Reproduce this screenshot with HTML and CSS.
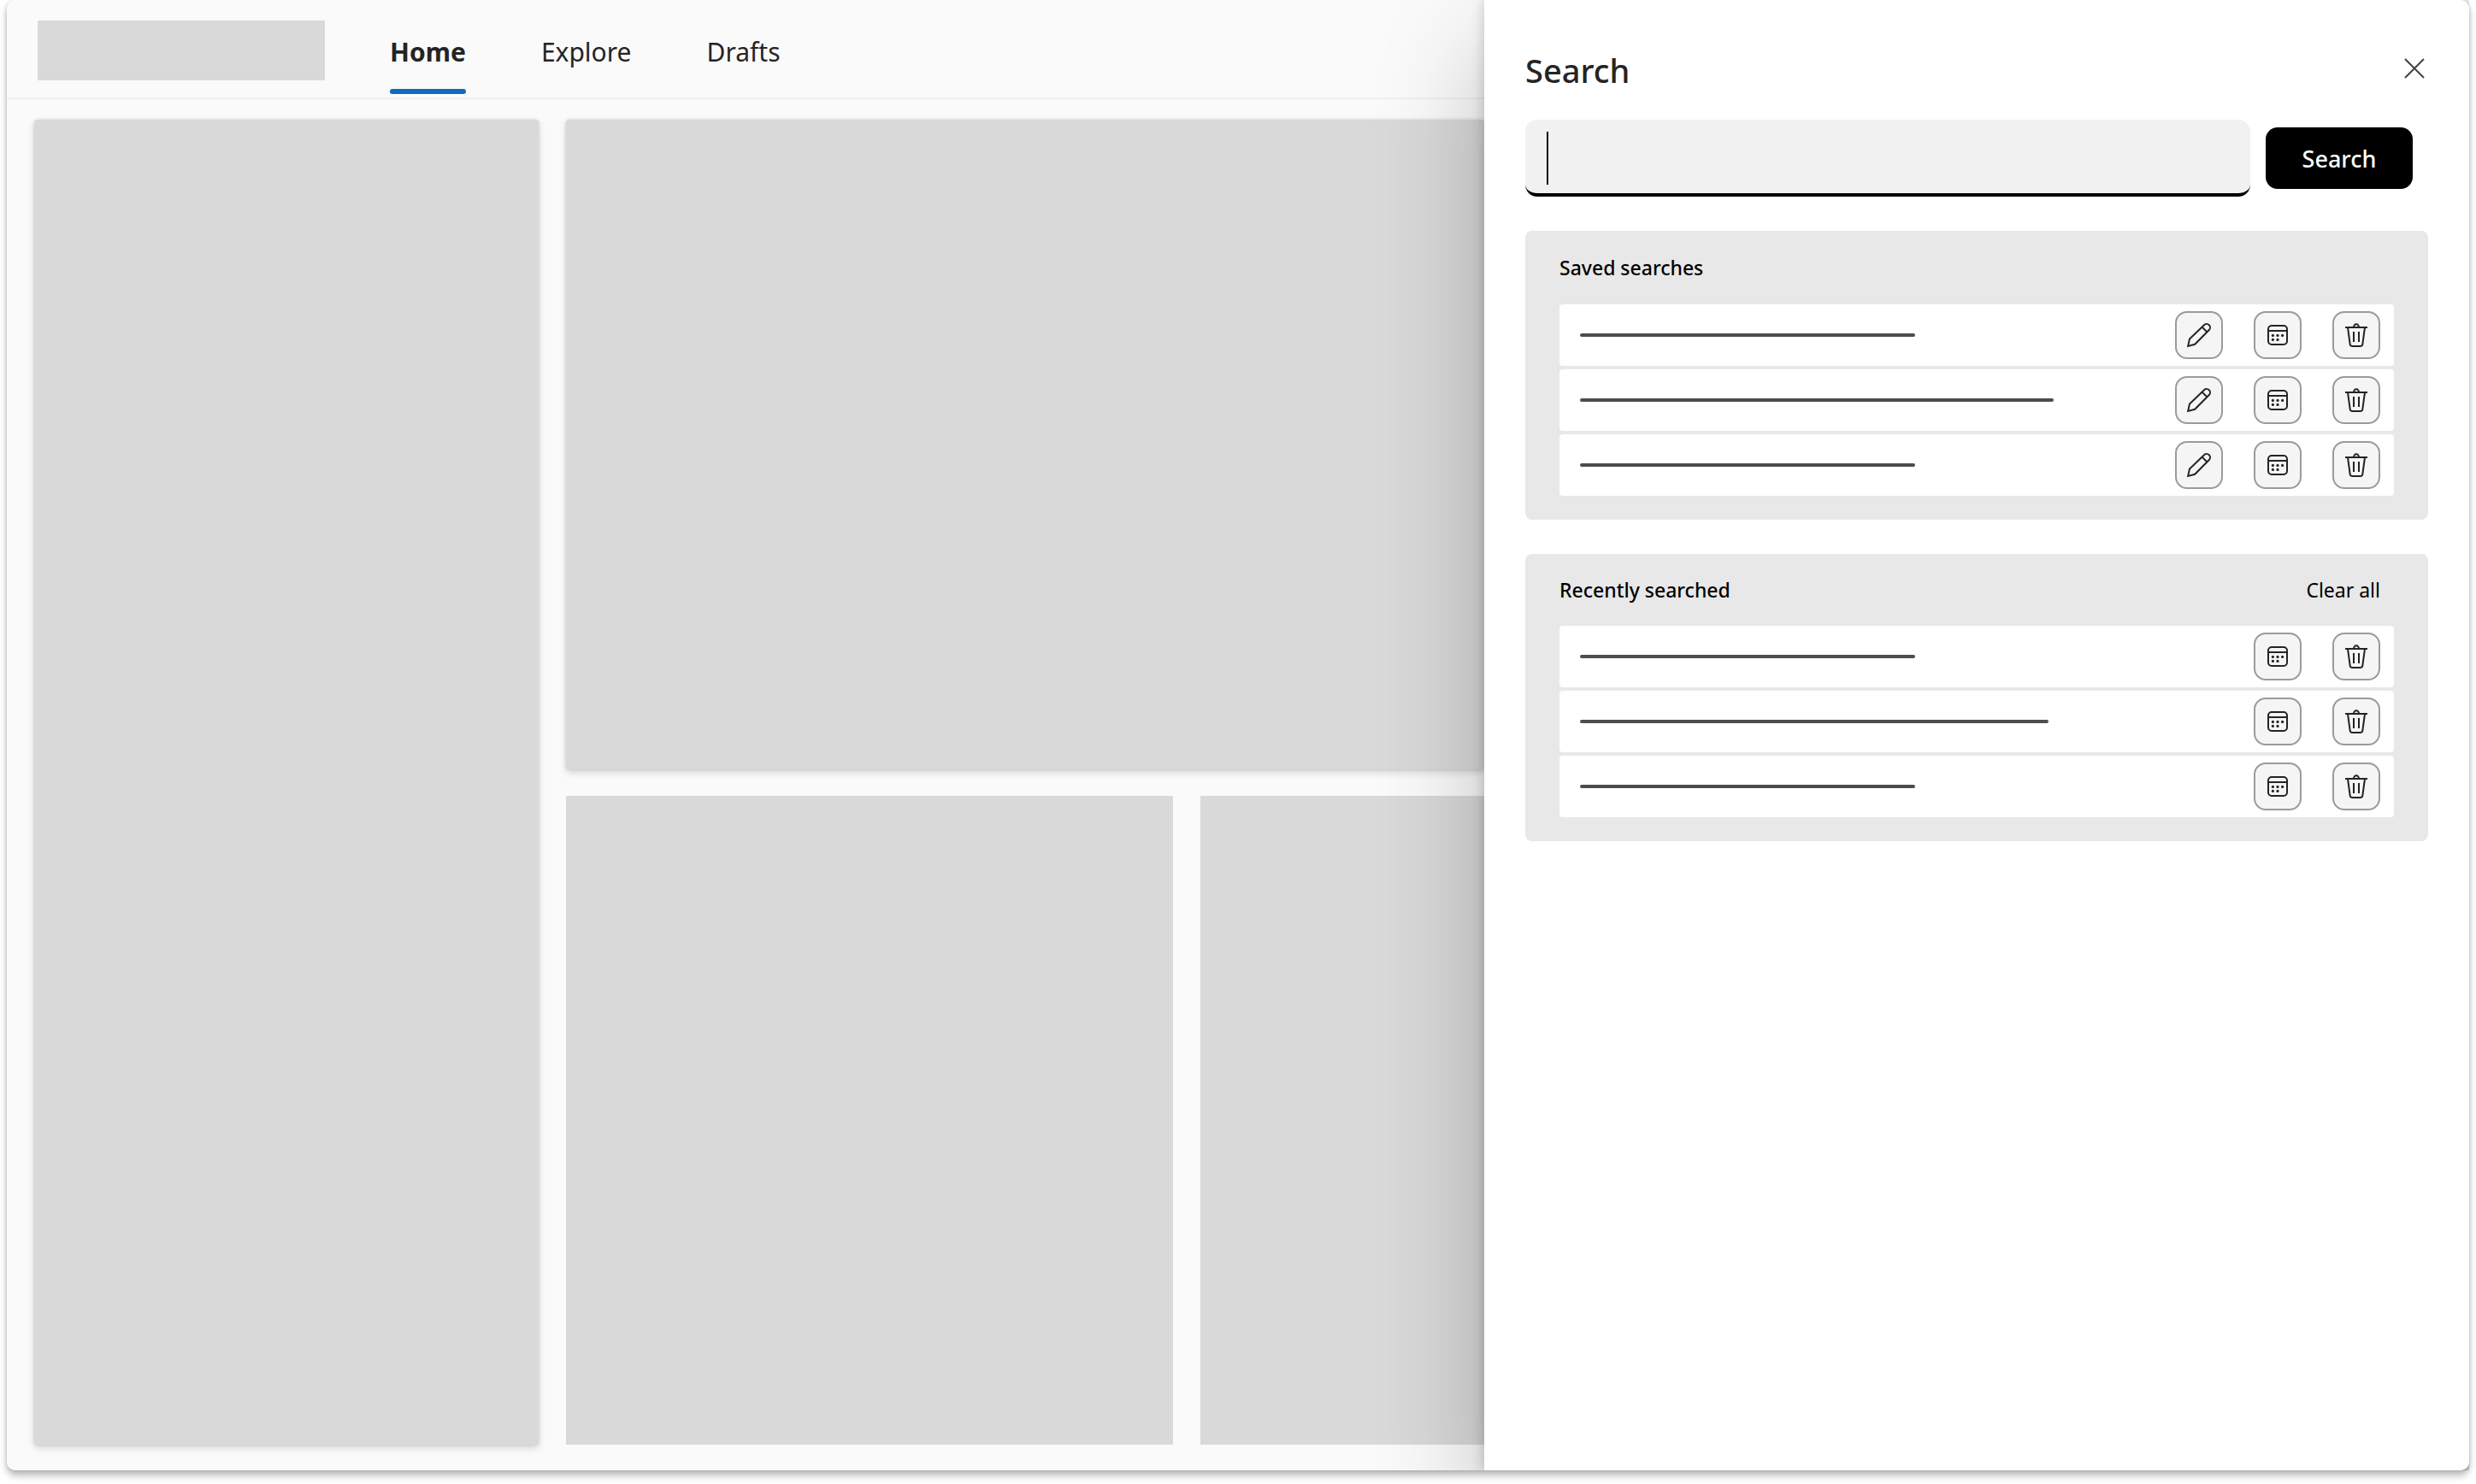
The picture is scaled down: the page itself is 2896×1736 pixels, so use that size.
FILE: index.html
```html
<!DOCTYPE html>
<html lang="en">
<head>
    <meta charset="UTF-8">
    <meta name="viewport" content="width=device-width, initial-scale=1.0">
    <title>Search</title>
    <link rel="stylesheet" href="styles.css">
</head>
<body>

    <!-- Shared icons -->
    <svg class="sprite" aria-hidden="true">
        <symbol id="icon-edit" viewBox="0 0 32 32">
            <path d="M3.2 28.9L5 20.6 22 4.2a4.1 4.1 0 0 1 5.8 5.8L11.2 26.8ZM19.6 6.6l5.7 5.7"/>
        </symbol>
        <symbol id="icon-calendar" viewBox="0 0 32 32">
            <rect x="5" y="5" width="22" height="22" rx="4"/>
            <path d="M5 11h22"/>
            <g class="dots">
                <circle cx="10.4" cy="16.4" r="1.6"/>
                <circle cx="16" cy="16.4" r="1.6"/>
                <circle cx="21.6" cy="16.4" r="1.6"/>
                <circle cx="10.4" cy="21.4" r="1.6"/>
                <circle cx="16" cy="21.4" r="1.6"/>
            </g>
        </symbol>
        <symbol id="icon-delete" viewBox="0 0 32 32">
            <path d="M3 7h26M13 7a3 3.8 0 0 1 6 0M6 7l2.6 19.2A3 3 0 0 0 11.6 29h8.8a3 3 0 0 0 3-2.8L26 7M13 12v12M19 12v12"/>
        </symbol>
    </svg>

    <div class="window">
        <div class="app">
            <header class="topbar">
                <div class="logo"></div>
                <nav class="tabs">
                    <a href="#" class="active">Home</a>
                    <a href="#">Explore</a>
                    <a href="#">Drafts</a>
                </nav>
            </header>
            <main class="board">
                <div class="card side raised"></div>
                <div class="card hero raised"></div>
                <div class="card"></div>
                <div class="card"></div>
            </main>
        </div>

        <aside class="drawer">
            <div class="drawer-head">
                <h1>Search</h1>
                <button type="button" class="close" aria-label="Close">
                    <svg viewBox="0 0 24 24"><path d="M1 1l22 22M23 1L1 23"/></svg>
                </button>
            </div>

            <form class="search-form">
                <div class="field">
                    <input type="text" id="query" aria-label="Search">
                    <span class="caret"></span>
                </div>
                <button type="button" class="submit">Search</button>
            </form>

            <section class="panel">
                <div class="panel-head">
                    <h2>Saved searches</h2>
                </div>
                <ul class="rows">
                    <li>
                        <span class="line"></span>
                        <button type="button" aria-label="Edit"><svg><use href="#icon-edit"/></svg></button>
                        <button type="button" aria-label="Schedule"><svg><use href="#icon-calendar"/></svg></button>
                        <button type="button" aria-label="Delete"><svg><use href="#icon-delete"/></svg></button>
                    </li>
                    <li>
                        <span class="line long"></span>
                        <button type="button" aria-label="Edit"><svg><use href="#icon-edit"/></svg></button>
                        <button type="button" aria-label="Schedule"><svg><use href="#icon-calendar"/></svg></button>
                        <button type="button" aria-label="Delete"><svg><use href="#icon-delete"/></svg></button>
                    </li>
                    <li>
                        <span class="line"></span>
                        <button type="button" aria-label="Edit"><svg><use href="#icon-edit"/></svg></button>
                        <button type="button" aria-label="Schedule"><svg><use href="#icon-calendar"/></svg></button>
                        <button type="button" aria-label="Delete"><svg><use href="#icon-delete"/></svg></button>
                    </li>
                </ul>
            </section>

            <section class="panel recent">
                <div class="panel-head">
                    <h2>Recently searched</h2>
                    <button type="button" class="clear">Clear all</button>
                </div>
                <ul class="rows">
                    <li>
                        <span class="line"></span>
                        <button type="button" aria-label="Schedule"><svg><use href="#icon-calendar"/></svg></button>
                        <button type="button" aria-label="Delete"><svg><use href="#icon-delete"/></svg></button>
                    </li>
                    <li>
                        <span class="line long"></span>
                        <button type="button" aria-label="Schedule"><svg><use href="#icon-calendar"/></svg></button>
                        <button type="button" aria-label="Delete"><svg><use href="#icon-delete"/></svg></button>
                    </li>
                    <li>
                        <span class="line"></span>
                        <button type="button" aria-label="Schedule"><svg><use href="#icon-calendar"/></svg></button>
                        <button type="button" aria-label="Delete"><svg><use href="#icon-delete"/></svg></button>
                    </li>
                </ul>
            </section>
        </aside>
    </div>

</body>
</html>
```
FILE: styles.css
```css
* {
    box-sizing: border-box;
}
body {
    margin: 0;
    padding: 0 8px 16px;
    background-color: #fff;
    color: #242424;
    font-family: "Noto Sans", "Open Sans", sans-serif;
}
h1, h2, ul {
    margin: 0;
    padding: 0;
}
button {
    font-family: inherit;
    cursor: pointer;
}
.sprite {
    display: none;
}
.window {
    display: flex;
    height: calc(100vh - 16px);
    border-radius: 10px;
    box-shadow: 0 6px 8px rgba(0, 0, 0, 0.28), 0 0 4px rgba(0, 0, 0, 0.14);
}

/* Page behind the drawer */
.app {
    display: flex;
    flex-direction: column;
    width: 60%;
    background-color: #fafafa;
    border-radius: 10px 0 0 10px;
    overflow: hidden;
}
.topbar {
    display: flex;
    gap: 76px;
    height: 116px;
    padding: 24px 36px 0;
    border-bottom: 2px solid #f0f0f0;
}
.logo {
    width: 336px;
    height: 70px;
    background-color: #d9d9d9;
}
.tabs {
    display: flex;
    gap: 88px;
    font-size: 30px;
    line-height: 74px;
}
.tabs a {
    height: 86px;
    color: #242424;
    text-decoration: none;
}
.tabs .active {
    font-weight: 700;
}
.tabs .active::after {
    content: "";
    display: block;
    height: 6px;
    margin-top: 6px;
    border-radius: 3px;
    background-color: #0f6cbd;
}
.board {
    display: grid;
    flex: 1;
    grid-template-columns: 590px 710px 1fr;
    grid-template-rows: 1fr 1fr;
    gap: 31px 32px;
    padding: 24px 0 30px 32px;
}
.card {
    background-color: #d9d9d9;
}
.raised {
    border-radius: 4px;
    box-shadow: 0 4px 8px rgba(0, 0, 0, 0.14), 0 0 4px rgba(0, 0, 0, 0.12);
}
.side {
    grid-row: 1 / 3;
}
.hero {
    grid-column: 2 / 4;
}

/* Search drawer */
.drawer {
    width: 40%;
    padding: 0 48px;
    background-color: #fff;
    border-radius: 0 10px 10px 0;
    box-shadow: 0 0 16px rgba(0, 0, 0, 0.2), 0 56px 128px rgba(0, 0, 0, 0.24);
    clip-path: inset(0 0 0 -160px);
}
.drawer-head {
    display: flex;
    align-items: center;
    justify-content: space-between;
    height: 140px;
    padding-top: 20px;
}
.drawer-head h1 {
    padding-top: 4px;
    font-size: 38px;
    font-weight: 500;
}
.close {
    padding: 4px;
    border: none;
    background: none;
}
.close svg {
    display: block;
    width: 24px;
    height: 24px;
    fill: none;
    stroke: #424242;
    stroke-width: 2;
}
.search-form {
    display: flex;
    align-items: center;
    gap: 18px;
    padding-right: 18px;
}
.field {
    position: relative;
    flex: 1;
}
.field input {
    display: block;
    width: 100%;
    height: 90px;
    padding: 0 24px;
    border: none;
    border-bottom: 4px solid #000;
    border-radius: 14px;
    outline: none;
    background-color: #f1f1f1;
    font-family: inherit;
    font-size: 30px;
}
.caret {
    position: absolute;
    left: 25px;
    top: 14px;
    width: 2px;
    height: 62px;
    background-color: #000;
}
.submit {
    width: 172px;
    height: 72px;
    border: none;
    border-radius: 14px;
    background-color: #000;
    color: #fff;
    font-size: 27px;
    font-weight: 500;
}
.panel {
    margin-top: 40px;
    padding: 0 40px 28px;
    border-radius: 8px;
    background-color: #e8e8e8;
    color: #000;
}
.panel-head {
    display: flex;
    align-items: center;
    justify-content: space-between;
    height: 86px;
    padding-right: 16px;
}
.recent .panel-head {
    height: 84px;
}
.panel-head h2 {
    font-size: 23px;
    font-weight: 500;
}
.clear {
    padding: 0;
    border: none;
    background: none;
    color: #000;
    font-size: 23px;
}
.rows {
    display: flex;
    flex-direction: column;
    gap: 4px;
    list-style: none;
}
.rows li {
    display: flex;
    align-items: center;
    gap: 36px;
    height: 72px;
    padding: 0 16px 0 24px;
    border-radius: 4px;
    background-color: #fff;
}
.line {
    width: 392px;
    height: 4px;
    margin-right: auto;
    border-radius: 2px;
    background-color: #4d4d4d;
}
.long {
    width: 554px;
}
.recent .long {
    width: 548px;
}
.rows button {
    width: 56px;
    height: 56px;
    padding: 10px;
    border: 2px solid #9b9b9b;
    border-radius: 14px;
    background-color: #f5f5f5;
}
.rows svg {
    display: block;
    width: 32px;
    height: 32px;
    fill: none;
    stroke: #242424;
    stroke-width: 2;
}
.dots {
    fill: #242424;
    stroke: none;
}
```
